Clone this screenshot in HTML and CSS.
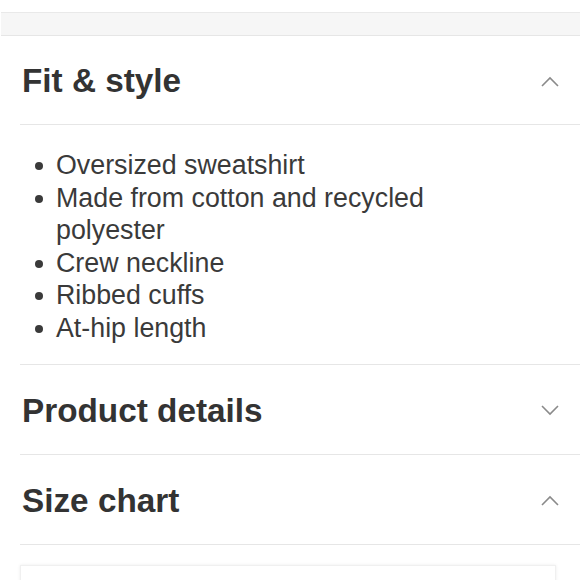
FILE: index.html
```html
<!DOCTYPE html>
<html>
<head>
<meta charset="utf-8">
<link rel="stylesheet" href="styles.css">
</head>
<body>
<div class="band"></div>
<div class="accordion">
  <div class="section">
    <div class="header">
      <h2 class="title">Fit &amp; style</h2>
      <svg class="chev" width="18" height="11" viewBox="0 0 18 11"><path d="M1 10 L9 2 L17 10" fill="none" stroke="#8a8a8a" stroke-width="1.6"/></svg>
    </div>
    <ul class="list">
      <li>Oversized sweatshirt</li>
      <li>Made from cotton and recycled polyester</li>
      <li>Crew neckline</li>
      <li>Ribbed cuffs</li>
      <li>At-hip length</li>
    </ul>
  </div>
  <div class="section">
    <div class="header">
      <h2 class="title">Product details</h2>
      <svg class="chev" width="18" height="11" viewBox="0 0 18 11"><path d="M1 1 L9 9 L17 1" fill="none" stroke="#8a8a8a" stroke-width="1.6"/></svg>
    </div>
  </div>
  <div class="section">
    <div class="header">
      <h2 class="title">Size chart</h2>
      <svg class="chev" width="18" height="11" viewBox="0 0 18 11"><path d="M1 10 L9 2 L17 10" fill="none" stroke="#8a8a8a" stroke-width="1.6"/></svg>
    </div>
    <div class="chart"></div>
  </div>
</div>
</body>
</html>
```
FILE: styles.css
```css
html, body {
  margin: 0;
  padding: 0;
  background: #ffffff;
  font-family: "Liberation Sans", Arial, Helvetica, sans-serif;
  color: #333333;
  overflow: hidden;
}
.band {
  margin: 12px 0 0 1px;
  height: 22px;
  background: #f6f6f6;
  border-top: 1px solid #e9e9e9;
  border-bottom: 1px solid #e6e6e6;
}
.accordion {
  padding-left: 20px;
}
.header {
  height: 86px;
  display: flex;
  align-items: center;
  justify-content: space-between;
  padding: 2px 21px 0 2px;
  border-bottom: 1px solid #e6e6e6;
}
.section + .section .header {
  height: 87px;
}
.title {
  margin: 0;
  font-size: 33.3px;
  font-weight: bold;
  color: #333333;
  letter-spacing: 0;
}
.chev {
  display: block;
}
.list {
  list-style: none;
  margin: 0;
  padding: 24px 0 20px 36px;
  border-bottom: 1px solid #e6e6e6;
  font-size: 26.8px;
  line-height: 32.5px;
  color: #3a3a3a;
}
.list li {
  position: relative;
  width: 420px;
}
.list li::before {
  content: "";
  position: absolute;
  left: -21px;
  top: 13px;
  width: 8px;
  height: 8px;
  border-radius: 50%;
  background: #3a3a3a;
}
.chart {
  margin: 20px 24px 0 0;
  height: 40px;
  border: 1px solid #f0f0f0;
  box-shadow: 0 0 3px rgba(0,0,0,0.08);
}
```
